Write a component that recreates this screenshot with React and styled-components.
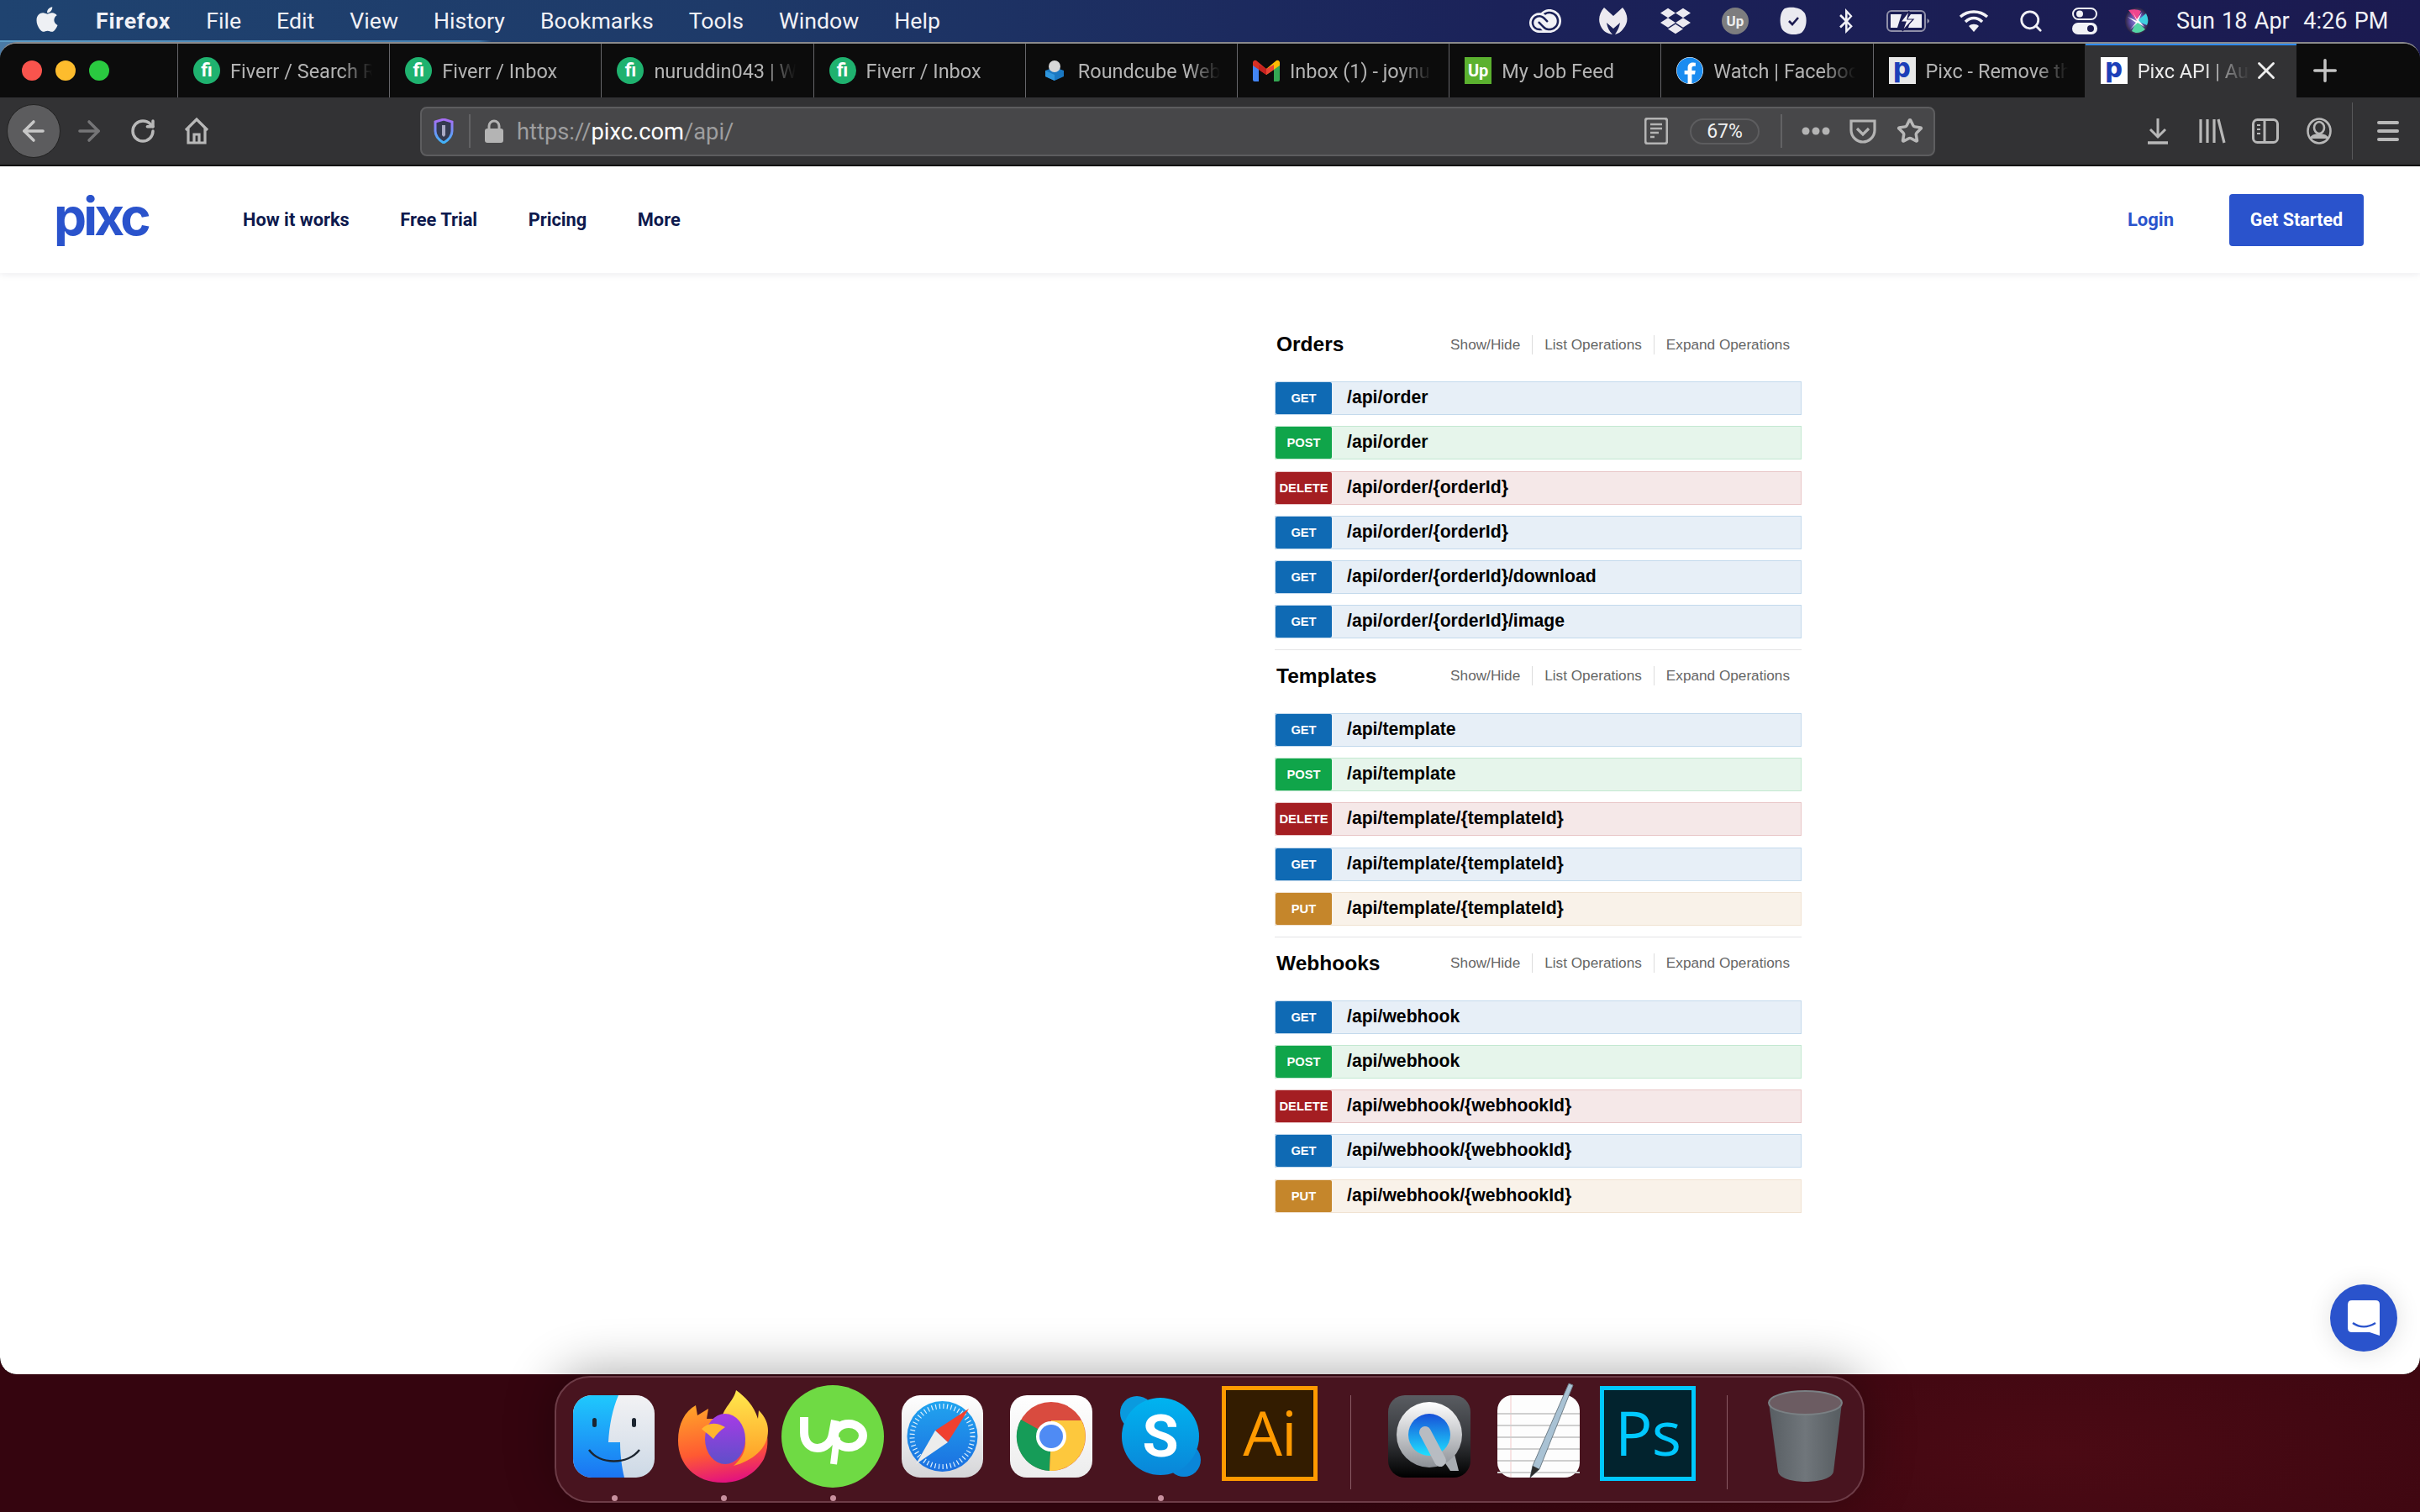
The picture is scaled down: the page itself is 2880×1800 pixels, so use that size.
import React from "react";
import styled, { createGlobalStyle } from "styled-components";
import { FaApple, FaDropbox, FaBluetoothB, FaFacebook } from "react-icons/fa";
import { SiAdobecreativecloud } from "react-icons/si";
import { ArrowLeft, ArrowRight, RotateCw, Search, Star, X, Plus } from "lucide-react";

const BLUE = "#2a53cc";

const GlobalStyle = createGlobalStyle`
  html, body {
    margin: 0;
    padding: 0;
    background: #35050f;
  }
  * {
    box-sizing: border-box;
  }
`;

const Desktop = styled.div`
  width: 2880px;
  height: 1800px;
  overflow: hidden;
  display: flex;
  flex-direction: column;
  font-family: Roboto, "Liberation Sans", sans-serif;
  background:
    linear-gradient(#4a7aa5, #4a7aa5) 0 50px / 20px 20px no-repeat,
    linear-gradient(#1b1a50, #1b1a50) 2860px 50px / 20px 20px no-repeat,
    radial-gradient(ellipse 900px 300px at 2450px 1730px, #4b0a14 0%, #3f0711 55%, #35050f 100%);
`;

/* mac menu bar */
const MenuBar = styled.div`
  height: 50px;
  flex: none;
  display: flex;
  align-items: center;
  color: #f1f1f6;
  font-size: 26.7px;
  background:
    linear-gradient(90deg, #5d9cc6 0, #3f78ab 570px, transparent 585px) bottom / 100% 2px no-repeat,
    linear-gradient(90deg, #1f4370 0%, #1e3a69 30%, #1b2259 62%, #1b1a50 100%);
`;

const AppleSlot = styled.div`
  width: 114px;
  flex: none;
  display: flex;
  justify-content: center;
  padding-right: 2px;
  margin-top: -4px;
`;

const MenuItems = styled.div`
  display: flex;
  gap: 42px;
`;

const MenuItem = styled.span`
  font-weight: ${({ $bold }) => ($bold ? 700 : 400)};
  letter-spacing: ${({ $bold }) => ($bold ? "0.8px" : "0")};
`;

const MenuRight = styled.div`
  margin-left: auto;
  display: flex;
  align-items: center;
  padding-right: 38px;
`;

const Slot = styled.div`
  width: ${({ $w }) => $w}px;
  margin-left: ${({ $ml }) => $ml || 0}px;
  flex: none;
  display: flex;
  align-items: center;
  justify-content: center;
  color: ${({ $color }) => $color || "inherit"};
`;

const Clock = styled.span`
  margin-left: 18px;
  width: 252px;
  font-size: 27px;
  word-spacing: 1.6px;
  white-space: pre;
`;

const UpBadge = styled.div`
  width: 32px;
  height: 32px;
  border-radius: 50%;
  background: #7d7d7f;
  color: #eee;
  font-size: 17px;
  font-weight: 700;
  display: flex;
  align-items: center;
  justify-content: center;
`;

/* browser window */
const Window = styled.div`
  height: 1586px;
  flex: none;
  display: flex;
  flex-direction: column;
  border-radius: 20px 20px 20px 20px;
  overflow: hidden;
  background: #0c0c0c;
  border-top: 2px solid #8a8a8c;
`;

const TabStrip = styled.div`
  height: 64px;
  flex: none;
  display: flex;
  background: #0c0c0c;
`;

const Traffic = styled.div`
  width: 211px;
  flex: none;
  display: flex;
  align-items: center;
  gap: 16px;
  padding-left: 26px;
`;

const Light = styled.span`
  width: 24px;
  height: 24px;
  border-radius: 50%;
  background: ${({ $c }) => $c};
`;

const Tab = styled.div`
  width: 252.2px;
  flex: none;
  display: flex;
  align-items: center;
  padding-left: 18px;
  border-left: 1px solid ${({ $active }) => ($active ? "transparent" : "#66666a")};
  background: ${({ $active }) => ($active ? "#323234" : "transparent")};
  box-shadow: ${({ $active }) => ($active ? "inset 0 2px 0 #2f8bf0" : "none")};
  position: relative;
`;

const Favicon = styled.div`
  width: 32px;
  height: 32px;
  flex: none;
  display: flex;
  align-items: center;
  justify-content: center;
  border-radius: ${({ $round }) => ($round ? "50%" : "0")};
  background: ${({ $bg }) => $bg || "transparent"};
  color: ${({ $fg }) => $fg || "#fff"};
  font-weight: ${({ $mono }) => ($mono ? 800 : 700)};
  font-size: ${({ $size }) => $size || 24}px;
  line-height: 1;
  padding-bottom: ${({ $mono }) => ($mono ? 6 : 0)}px;
  font-family: ${({ $mono }) => ($mono ? "Inter, sans-serif" : "inherit")};
`;

const TabLabel = styled.span`
  margin-left: 12px;
  padding-top: 2px;
  width: ${({ $w }) => $w || 182}px;
  white-space: nowrap;
  font-size: 23.5px;
  color: ${({ $active }) => ($active ? "#ededed" : "#b4b4b4")};
  mask-image: linear-gradient(90deg, #000 ${({ $w }) => ($w ? 54 : 72)}%, transparent ${({ $w }) => ($w ? 94 : 93)}%);
`;

const TabClose = styled.div`
  position: absolute;
  left: 198px;
  top: 15px;
  color: #eee;
  display: flex;
`;

const NewTab = styled.div`
  width: 68px;
  display: flex;
  align-items: center;
  justify-content: center;
  color: #c4c4c4;
`;

const Toolbar = styled.div`
  height: 80px;
  flex: none;
  display: flex;
  align-items: center;
  padding-left: 8px;
  background: #323234;
  color: #b8b8b8;
  border-bottom: 0;
`;

const BackButton = styled.div`
  width: 64px;
  height: 64px;
  flex: none;
  border-radius: 50%;
  background: #5c5c5e;
  border: 1px solid #222;
  display: flex;
  align-items: center;
  justify-content: center;
  color: #c8c8c8;
`;

const UrlBar = styled.div`
  width: 1803px;
  height: 59px;
  margin-left: 232px;
  flex: none;
  display: flex;
  align-items: center;
  background: #474749;
  border: 2px solid #5d5d5f;
  border-radius: 8px;
`;

const UrlDivider = styled.span`
  width: 2px;
  height: ${({ $h }) => $h || 40}px;
  flex: none;
  margin-left: ${({ $ml }) => $ml}px;
  background: #626264;
`;

const UrlText = styled.div`
  margin-left: 15px;
  padding-top: 1px;
  font-size: 27.3px;
  color: #9e9e9f;
  white-space: nowrap;
`;

const UrlHost = styled.span`
  color: #fff;
`;

const ZoomPill = styled.div`
  width: 83px;
  height: 31px;
  margin-left: 25px;
  flex: none;
  border: 2px solid #5d5d5f;
  border-radius: 16px;
  display: flex;
  align-items: center;
  justify-content: center;
  color: #f0f0f0;
  font-size: 23px;
`;

const UrlActions = styled.div`
  margin-left: auto;
  display: flex;
  align-items: center;
  padding-right: 10px;
`;

const ToolbarDivider = styled.span`
  width: 1px;
  height: 68px;
  margin-left: 5px;
  flex: none;
  background: #58585a;
`;

/* web page */
const Page = styled.div`
  flex: 1;
  position: relative;
  margin-top: 2px;
  background: #fff;
  border-radius: 0 0 20px 20px;
`;

const SiteNav = styled.div`
  height: 127px;
  display: flex;
  align-items: center;
  padding-left: 64px;
  padding-right: 67px;
  box-shadow: 0 2px 8px rgba(20, 30, 70, 0.08);
`;

const Logo = styled.div`
  width: 225px;
  flex: none;
  font-family: Inter, sans-serif;
  font-weight: 700;
  font-size: 62px;
  letter-spacing: -3.8px;
  line-height: 1;
  color: ${BLUE};
  margin-top: -8px;
`;

const NavLinks = styled.div`
  display: flex;
  gap: 60.5px;
`;

const NavLink = styled.a`
  font-size: 21.8px;
  font-weight: 700;
  color: #0e1a4e;
`;

const NavRight = styled.div`
  margin-left: auto;
  display: flex;
  align-items: center;
  gap: 66px;
`;

const LoginLink = styled.a`
  font-size: 22px;
  font-weight: 700;
  color: ${BLUE};
`;

const CtaButton = styled.div`
  width: 160px;
  height: 62px;
  border-radius: 4px;
  background: ${BLUE};
  color: #fff;
  font-size: 21.5px;
  font-weight: 700;
  display: flex;
  align-items: center;
  justify-content: center;
`;

const ApiList = styled.div`
  width: 627px;
  margin-left: 1517px;
  padding-top: 70px;
  font-family: "Liberation Sans", Arial, sans-serif;
`;

const Section = styled.section`
  padding-top: ${({ $first }) => ($first ? 0 : 16)}px;
  padding-bottom: 12.7px;
  border-top: ${({ $first }) => ($first ? "none" : "1px solid #e4e4e6")};
`;

const SectionHead = styled.div`
  height: 30px;
  margin-bottom: 29px;
  display: flex;
  align-items: center;
  justify-content: space-between;
  padding-left: 2px;
  padding-right: 14px;
`;

const SectionTitle = styled.h2`
  margin: 0;
  font-size: 24.5px;
  font-weight: 700;
  color: #000;
`;

const SectionLinks = styled.div`
  display: flex;
  align-items: center;
`;

const SectionLink = styled.span`
  height: 23px;
  line-height: 23px;
  font-size: 17.2px;
  color: #666;
  padding: 0 14px;
  border-left: 1px solid #ddd;
  &:first-child {
    border-left: none;
  }
  &:last-child {
    padding-right: 0;
  }
`;

const Rows = styled.div`
  display: flex;
  flex-direction: column;
  gap: 13.25px;
`;

const METHOD = {
  GET: { main: "#0f6ab4", bg: "#e7eff7", line: "#c3d9ec" },
  POST: { main: "#10a54a", bg: "#e6f5eb", line: "#c3e8d1" },
  DELETE: { main: "#a41e22", bg: "#f5e8e8", line: "#e8c6c7" },
  PUT: { main: "#c5862b", bg: "#f9f2e9", line: "#f0e2d1" },
};

const Row = styled.div`
  height: 40px;
  display: flex;
  align-items: center;
  background: ${({ $m }) => METHOD[$m].bg};
  border: 1px solid ${({ $m }) => METHOD[$m].line};
`;

const MethodTag = styled.span`
  width: 67px;
  height: 38px;
  flex: none;
  border-radius: 2px;
  background: ${({ $m }) => METHOD[$m].main};
  color: #fff;
  font-size: 14.7px;
  font-weight: 700;
  display: flex;
  align-items: center;
  justify-content: center;
`;

const RowPath = styled.span`
  margin-left: 18px;
  margin-bottom: 2px;
  font-size: 21.2px;
  font-weight: 700;
  color: #000;
`;

const ChatBubble = styled.div`
  position: absolute;
  left: 2773px;
  top: 1331px;
  width: 80px;
  height: 80px;
  border-radius: 50%;
  background: ${BLUE};
  box-shadow: 0 2px 30px rgba(0, 0, 0, 0.12);
  display: flex;
  align-items: center;
  justify-content: center;
`;

/* dock */
const Dock = styled.div`
  position: relative;
  width: 1559px;
  height: 151px;
  margin-top: 2px;
  margin-left: 660px;
  flex: none;
  display: flex;
  align-items: center;
  padding-left: 20px;
  padding-bottom: 8px;
  background: #48141f;
  border: 2px solid #6d3c47;
  border-radius: 42px;
  box-shadow: 0 -6px 60px rgba(0, 0, 0, 0.32);
`;

const DockItem = styled.div`
  position: relative;
  width: ${({ $w }) => $w}px;
  height: ${({ $h }) => $h}px;
  margin-left: ${({ $ml }) => $ml || 0}px;
  margin-top: ${({ $mt }) => $mt || 0}px;
  flex: none;
`;

const DockDot = styled.span`
  position: absolute;
  left: 50%;
  top: calc(50% + 70px);
  width: 7px;
  height: 7px;
  margin-left: -3px;
  border-radius: 50%;
  background: #c8909e;
`;

const DockSep = styled.span`
  width: 1px;
  height: 112px;
  margin-left: ${({ $ml }) => $ml}px;
  margin-top: 14px;
  flex: none;
  background: #8a5a64;
`;

const AppTile = styled.div`
  width: 100%;
  height: 100%;
  border: 5px solid ${({ $line }) => $line};
  box-shadow: inset 0 0 0 1px rgba(0, 0, 0, 0.25);
  background: ${({ $bg }) => $bg};
  color: ${({ $line }) => $line};
  font-family: "Open Sans", sans-serif;
  font-weight: 500;
  font-size: 74px;
  line-height: 100px;
  text-align: center;
  letter-spacing: -1px;
`;

const Fill = styled.svg`
  display: block;
  width: 100%;
  height: 100%;
  overflow: visible;
`;

/* small icons */
const Malware = () => (
  <svg width="36" height="34" viewBox="0 0 36 34" fill="#eceaf0">
    <path d="M7 1 L18 11 L29 1 C35 8 37 18 30 26 C27 30 24 32 20 33 C23 28 25 25 26 19 L18 26 L10 19 C11 25 13 29 17 33 C11 32 7 30 4 25 C-1 17 1 8 7 1Z" />
  </svg>
);

const TodoBadge = () => (
  <svg width="32" height="34" viewBox="0 0 32 34">
    <path d="M6 2 C14 -1 26 1 30 8 C33 15 32 26 26 31 C18 35 7 33 3 27 C-1 20 0 6 6 2Z" fill="#eaeaf0" />
    <path d="M11 17 L15 21 L22 13" stroke="#1b1a50" strokeWidth="2.6" fill="none" />
  </svg>
);

const Battery = () => (
  <svg width="52" height="26" viewBox="0 0 52 26">
    <rect x="1" y="1" width="45" height="24" rx="5" fill="none" stroke="#8f8fa8" strokeWidth="2" />
    <path d="M5 5 H18 L13 21 H5Z M42 5 H29 L24 12 H29 L26 21 H42Z" fill="#f1f1f6" />
    <path d="M27 1 L17 14 H23 L19 25 L32 11 H25Z" fill="#f1f1f6" stroke="#1b1a50" strokeWidth="1.2" />
    <path d="M48.500 10 L51 12 V14 L48.500 16Z" fill="#8f8fa8" />
  </svg>
);

const Wifi = () => (
  <svg width="36" height="30" viewBox="0 0 36 30" fill="none" stroke="#f1f1f6" strokeWidth="3.4">
    <path d="M2 10 C11 2 25 2 34 10" />
    <path d="M8 16 C14 10 22 10 28 16" />
    <path d="M18 28 L12 21 C15 18 21 18 24 21Z" fill="#f1f1f6" stroke="none" />
  </svg>
);

const ControlCenter = () => (
  <svg width="30" height="32" viewBox="0 0 30 32">
    <rect x="1" y="1" width="28" height="13" rx="6.500" fill="none" stroke="#f1f1f6" strokeWidth="2" />
    <circle cx="9" cy="7.500" r="4" fill="#f1f1f6" />
    <rect x="0" y="18" width="30" height="14" rx="7" fill="#f1f1f6" />
    <circle cx="22" cy="25" r="4" fill="#1b1a50" />
  </svg>
);

const Siri = () => (
  <svg width="30" height="34" viewBox="0 0 30 34">
    <defs>
      <radialGradient id="siriBg">
        <stop offset="0" stopColor="#9a8fe0" />
        <stop offset="0.6" stopColor="#5a4aa0" />
        <stop offset="1" stopColor="#2c2440" />
      </radialGradient>
    </defs>
    <ellipse cx="15" cy="17" rx="14" ry="16" fill="url(#siriBg)" />
    <path d="M15 17 L5 4 Q14 2 20 5Z" fill="#f0458e" />
    <path d="M15 17 L26 8 Q30 16 27 22Z" fill="#3fd0e0" />
    <path d="M15 17 L25 27 Q16 34 9 29Z" fill="#55d6a5" />
    <path d="M15 17 L4 12 L14 19 L7 27 L16 19 L24 24 L17 16 L21 7 L15 15 L10 6Z" fill="#fff" />
  </svg>
);

const Shield = () => (
  <svg width="24" height="30" viewBox="0 0 24 30">
    <defs>
      <linearGradient id="shieldLine" x1="0" y1="0" x2="0" y2="1">
        <stop offset="0" stopColor="#a86df5" />
        <stop offset="1" stopColor="#3fb3f8" />
      </linearGradient>
    </defs>
    <path d="M2 4 L12 1 L22 4 V15 C22 22 17 26 12 29 C7 26 2 22 2 15Z" fill="#343a50" stroke="url(#shieldLine)" strokeWidth="3" />
    <path d="M10 8 H14 V20 L12 22 L10 20Z" fill="#a9a9c4" />
  </svg>
);

const LockIcon = () => (
  <svg width="24" height="28" viewBox="0 0 24 28" fill="#b4b4b4">
    <path d="M6 12 V8 a6 6 0 0 1 12 0 V12" fill="none" stroke="#b4b4b4" strokeWidth="3" />
    <rect x="1" y="11" width="22" height="17" rx="3" />
  </svg>
);

const HomeIcon = () => (
  <svg width="32" height="32" viewBox="0 0 32 32" fill="none" stroke="#b8b8b8" strokeWidth="3.2">
    <path d="M3 15 L16 2 L29 15" />
    <path d="M6 13 V30 H26 V13" />
    <path d="M13 30 V20 H19 V30" />
  </svg>
);

const ReaderIcon = () => (
  <svg width="28" height="32" viewBox="0 0 28 32">
    <rect x="1" y="1" width="26" height="30" rx="3" fill="none" stroke="#b4b4b4" strokeWidth="3" />
    <path d="M7 8 H21 M7 13 H21 M7 18 H17 M7 23 H12" stroke="#b4b4b4" strokeWidth="2.400" />
  </svg>
);

const PocketIcon = () => (
  <svg width="32" height="30" viewBox="0 0 32 30" fill="none" stroke="#b4b4b4" strokeWidth="3.200">
    <path d="M2 3 H30 V14 C30 22 23 28 16 28 C9 28 2 22 2 14Z" />
    <path d="M9 12 L16 19 L23 12" />
  </svg>
);

const DotsIcon = () => (
  <svg width="34" height="10" viewBox="0 0 34 10" fill="#b4b4b4">
    <circle cx="5" cy="5" r="4.500" />
    <circle cx="17" cy="5" r="4.500" />
    <circle cx="29" cy="5" r="4.500" />
  </svg>
);

const DownloadIcon = () => (
  <svg width="26" height="32" viewBox="0 0 26 32" fill="none" stroke="#b8b8b8" strokeWidth="3">
    <path d="M13 1 V23 M4 14 L13 23 L22 14" />
    <path d="M1 30 H25" strokeWidth="3.600" />
  </svg>
);

const LibraryIcon = () => (
  <svg width="32" height="30" viewBox="0 0 32 30" fill="none" stroke="#b8b8b8" strokeWidth="3.200">
    <path d="M2 1 V29 M10 1 V29 M18 1 V29 M23 1 L30 29" />
  </svg>
);

const SidebarIcon = () => (
  <svg width="32" height="30" viewBox="0 0 32 30" fill="none" stroke="#b8b8b8" strokeWidth="3">
    <rect x="1.500" y="1.500" width="29" height="27" rx="5" />
    <path d="M15 1 V29" />
    <path d="M6 8 H10 M6 13 H10 M6 18 H10" strokeWidth="2.200" />
  </svg>
);

const AccountIcon = () => (
  <svg width="30" height="32" viewBox="0 0 30 32" fill="none" stroke="#b8b8b8" strokeWidth="2.600">
    <ellipse cx="15" cy="16" rx="13.500" ry="14.500" />
    <ellipse cx="15" cy="12" rx="6" ry="7" />
    <path d="M5 25 C7 19 23 19 25 25" fill="#b8b8b8" />
  </svg>
);

const MenuIcon = () => (
  <svg width="26" height="24" viewBox="0 0 26 24" fill="#b8b8b8">
    <rect y="0" width="26" height="4" rx="2" />
    <rect y="10" width="26" height="4" rx="2" />
    <rect y="20" width="26" height="4" rx="2" />
  </svg>
);

const Roundcube = () => (
  <svg width="24" height="26" viewBox="0 0 24 26">
    <path d="M1 13 L12 9 L23 13 V20 L12 25 L1 20Z" fill="#1a78c2" />
    <path d="M1 13 L12 18 V25 L1 20Z" fill="#2f96dd" />
    <circle cx="12" cy="8" r="7" fill="#d8d8d8" />
  </svg>
);

const Gmail = () => (
  <svg width="32" height="26" viewBox="0 0 32 26">
    <path d="M0 3 L7 6 V26 H2 Q0 26 0 24Z" fill="#4285f4" />
    <path d="M32 3 L25 6 V26 H30 Q32 26 32 24Z" fill="#34a853" />
    <path d="M0 7 V3 Q1 0 4 1 L16 11 L16 18Z" fill="#d93025" />
    <path d="M7 6 L16 11 V18 L7 12Z" fill="#c5221f" />
    <path d="M32 7 V3 Q31 0 28 1 L16 11 V18Z" fill="#fbbc04" />
    <path d="M25 6 L16 11 V18 L25 12Z" fill="#ea4335" />
  </svg>
);

const ChatIcon = () => (
  <svg width="38" height="42" viewBox="0 0 38 42">
    <path d="M5 0 H33 Q38 0 38 5 V42 L26 38 H5 Q0 38 0 33 V5 Q0 0 5 0Z" fill="#fff" />
    <path d="M6 27 C15 33 23 33 33 27" fill="none" stroke={BLUE} strokeWidth="2.600" />
  </svg>
);

/* dock art */
const Finder = () => (
  <Fill viewBox="0 0 97 98">
    <defs>
      <linearGradient id="fL" x1="0" y1="0" x2="0" y2="1">
        <stop offset="0" stopColor="#1fc9fd" />
        <stop offset="1" stopColor="#1b74f2" />
      </linearGradient>
      <linearGradient id="fR" x1="0" y1="0" x2="0" y2="1">
        <stop offset="0" stopColor="#f2f2f4" />
        <stop offset="1" stopColor="#cdd9e6" />
      </linearGradient>
      <clipPath id="fC">
        <rect width="97" height="98" rx="22" />
      </clipPath>
    </defs>
    <g clipPath="url(#fC)">
      <rect width="97" height="98" fill="url(#fR)" />
      <path d="M0 0 H54 C47 16 43 36 42 56 H56 C56 70 58 86 61 98 H0Z" fill="url(#fL)" />
    </g>
    <rect x="23" y="27" width="5" height="11" rx="2.500" fill="#1c2530" />
    <rect x="70" y="27" width="5" height="11" rx="2.500" fill="#1c2530" />
    <path d="M19 65 C32 83 65 83 79 65" fill="none" stroke="#1c2530" strokeWidth="2.500" />
  </Fill>
);

const Firefox = () => (
  <Fill viewBox="0 0 107 110">
    <defs>
      <linearGradient id="ffO" x1="0.3" y1="0" x2="0.5" y2="1">
        <stop offset="0" stopColor="#ffa229" />
        <stop offset="0.6" stopColor="#ff5a32" />
        <stop offset="1" stopColor="#e3127f" />
      </linearGradient>
      <linearGradient id="ffY" x1="0.5" y1="0" x2="0.5" y2="1">
        <stop offset="0" stopColor="#ffe94e" />
        <stop offset="1" stopColor="#ff9a24" />
      </linearGradient>
      <linearGradient id="ffP" x1="0.5" y1="0" x2="0.5" y2="1">
        <stop offset="0" stopColor="#a63be6" />
        <stop offset="1" stopColor="#5f4fc9" />
      </linearGradient>
    </defs>
    <path d="M53 110 C20 110 0 88 0 60 C0 40 8 25 21 18 L23 30 L36 22 L34 34 L74 34 L104 40 C108 60 107 70 102 82 C92 100 74 110 53 110Z" fill="url(#ffO)" />
    <path d="M69 0 C66 14 52 22 52 36 C52 44 60 46 75 46 C85 62 80 78 66 90 C88 84 107 70 107 48 C107 40 104 32 96 24 L95 34 C90 18 80 8 69 0Z" fill="url(#ffY)" />
    <ellipse cx="56" cy="58" rx="24" ry="30" fill="url(#ffP)" />
    <path d="M28 46 C36 38 46 38 56 44 C50 48 46 52 42 58 C36 52 32 50 28 46Z" fill="#ffb52e" />
  </Fill>
);

const UpworkLogo = () => (
  <Fill viewBox="0 0 122 122">
    <circle cx="61" cy="61" r="61" fill="#6fda44" />
    <g fill="none" stroke="#fff" strokeWidth="10">
      <path d="M27 38 V56 C27 82 58 80 61 58 L64 42" />
      <ellipse cx="80" cy="60" rx="17" ry="14" />
      <path d="M66 62 L62 94" strokeWidth="8" />
    </g>
  </Fill>
);

const Safari = () => (
  <Fill viewBox="0 0 97 98">
    <defs>
      <linearGradient id="sBg" x1="0" y1="0" x2="0" y2="1">
        <stop offset="0" stopColor="#fff" />
        <stop offset="1" stopColor="#d5d5d8" />
      </linearGradient>
      <linearGradient id="sD" x1="0" y1="0" x2="0" y2="1">
        <stop offset="0" stopColor="#21a4ef" />
        <stop offset="1" stopColor="#1b6fe0" />
      </linearGradient>
    </defs>
    <rect width="97" height="98" rx="22" fill="url(#sBg)" />
    <circle cx="48.500" cy="49" r="42" fill="url(#sD)" />
    <circle cx="48.500" cy="49" r="36" fill="none" stroke="#dff1fc" strokeWidth="6" strokeDasharray="1.200 3.400" />
    <path d="M80 16 L40 42 L55 56Z" fill="#f0402f" />
    <path d="M17 82 L40 42 L55 56Z" fill="#ececec" />
  </Fill>
);

const Chrome = () => (
  <Fill viewBox="0 0 98 98">
    <defs>
      <linearGradient id="cBg" x1="0" y1="0" x2="0" y2="1">
        <stop offset="0" stopColor="#fff" />
        <stop offset="1" stopColor="#ececec" />
      </linearGradient>
    </defs>
    <rect width="98" height="98" rx="20" fill="url(#cBg)" />
    <circle cx="49" cy="49" r="41" fill="#d94b3f" />
    <path d="M49 49 L13 29 A41 41 0 0 0 47 90Z" fill="#169c58" />
    <path d="M49 49 L47 90 A41 41 0 0 0 85 30 L49 30Z" fill="#fdc83d" />
    <circle cx="49" cy="49" r="18" fill="#fff" />
    <circle cx="49" cy="49" r="14" fill="#4f8bf4" />
  </Fill>
);

const Skype = () => (
  <Fill viewBox="0 0 96 96">
    <defs>
      <linearGradient id="skB" x1="0" y1="0" x2="0" y2="1">
        <stop offset="0" stopColor="#00b4f0" />
        <stop offset="1" stopColor="#0a86d8" />
      </linearGradient>
    </defs>
    <circle cx="20" cy="20" r="20" fill="#0a9ade" />
    <circle cx="76" cy="76" r="20" fill="#0a86d8" />
    <ellipse cx="48" cy="48" rx="46" ry="46" fill="url(#skB)" />
    <text x="48" y="72" textAnchor="middle" fontFamily="Roboto, sans-serif" fontWeight="700" fontSize="70" fill="#fff">S</text>
  </Fill>
);

const QuickTime = () => (
  <Fill viewBox="0 0 98 98">
    <defs>
      <linearGradient id="qBg" x1="0" y1="0" x2="0" y2="1">
        <stop offset="0" stopColor="#5a5d62" />
        <stop offset="0.55" stopColor="#34363a" />
        <stop offset="1" stopColor="#000" />
      </linearGradient>
      <linearGradient id="qR" x1="0" y1="0" x2="0" y2="1">
        <stop offset="0" stopColor="#fff" />
        <stop offset="1" stopColor="#8c9096" />
      </linearGradient>
      <linearGradient id="qB" x1="0" y1="0" x2="0" y2="1">
        <stop offset="0" stopColor="#1750d8" />
        <stop offset="1" stopColor="#1fe0ff" />
      </linearGradient>
    </defs>
    <rect width="98" height="98" rx="20" fill="url(#qBg)" />
    <path d="M84 90 L74 90 L66 78 L78 66Z" fill="#a9adb2" />
    <circle cx="49" cy="47" r="39" fill="url(#qR)" />
    <circle cx="49" cy="47" r="25" fill="url(#qB)" />
    <path d="M44 44 L62 78" stroke="#b8bcc2" strokeWidth="14" strokeLinecap="round" />
  </Fill>
);

const NotesPad = () => (
  <Fill viewBox="0 0 98 112">
    <rect x="0" y="14" width="98" height="98" rx="18" fill="#fdfdfd" />
    <path d="M16 14 V112" stroke="#f3c9c9" strokeWidth="1" />
    {[36, 50, 64, 78, 92, 106].map((y) => (
      <path key={y} d="M0 0 H98" transform={`translate(0 ${y})`} stroke="#cfcfcf" strokeWidth="2" />
    ))}
    <path d="M85 0 L90 2 L50 102 L39 112 L42 98Z" fill="#a9c2d4" stroke="#6f7e88" strokeWidth="1" />
    <path d="M50 102 L39 112 L42 98Z" fill="#2d2d2d" />
  </Fill>
);

const Trash = () => (
  <Fill viewBox="0 0 87 108">
    <defs>
      <linearGradient id="tG" x1="0" y1="0" x2="1" y2="0">
        <stop offset="0" stopColor="#585e63" />
        <stop offset="0.5" stopColor="#70767b" />
        <stop offset="1" stopColor="#565c60" />
      </linearGradient>
    </defs>
    <path d="M0 14 H87 L77 96 C74 112 14 112 11 96Z" fill="url(#tG)" />
    <ellipse cx="43.500" cy="14" rx="43.500" ry="14" fill="#6c5c62" stroke="#7a8084" strokeWidth="2" />
  </Fill>
);

const TABS = [
  { key: "f1", label: "Fiverr / Search R", fav: "fi" },
  { key: "f2", label: "Fiverr / Inbox", fav: "fi" },
  { key: "f3", label: "nuruddin043 | W", fav: "fi" },
  { key: "f4", label: "Fiverr / Inbox", fav: "fi" },
  { key: "rc", label: "Roundcube Web", fav: "rc" },
  { key: "gm", label: "Inbox (1) - joynu", fav: "gm" },
  { key: "up", label: "My Job Feed", fav: "up" },
  { key: "fb", label: "Watch | Faceboo", fav: "fb" },
  { key: "px", label: "Pixc - Remove th", fav: "px" },
];

const tabIcon = (fav, active) => {
  if (fav === "fi") return <Favicon $round $bg="#1fb26f" $size={22}>fi</Favicon>;
  if (fav === "rc") return <Favicon><Roundcube /></Favicon>;
  if (fav === "gm") return <Favicon><Gmail /></Favicon>;
  if (fav === "up") return <Favicon $bg="#5bb12f" $size={20}>Up</Favicon>;
  if (fav === "fb") return <Favicon><FaFacebook size={32} color="#1a8cf0" style={{ background: "#fff", borderRadius: "50%" }} /></Favicon>;
  return <Favicon $bg={active ? "#fff" : "#e8e8e8"} $fg="#1c3fb8" $mono $size={32}>p</Favicon>;
};

const SECTIONS = [
  {
    title: "Orders",
    rows: [
      ["GET", "/api/order"],
      ["POST", "/api/order"],
      ["DELETE", "/api/order/{orderId}"],
      ["GET", "/api/order/{orderId}"],
      ["GET", "/api/order/{orderId}/download"],
      ["GET", "/api/order/{orderId}/image"],
    ],
  },
  {
    title: "Templates",
    rows: [
      ["GET", "/api/template"],
      ["POST", "/api/template"],
      ["DELETE", "/api/template/{templateId}"],
      ["GET", "/api/template/{templateId}"],
      ["PUT", "/api/template/{templateId}"],
    ],
  },
  {
    title: "Webhooks",
    rows: [
      ["GET", "/api/webhook"],
      ["POST", "/api/webhook"],
      ["DELETE", "/api/webhook/{webhookId}"],
      ["GET", "/api/webhook/{webhookId}"],
      ["PUT", "/api/webhook/{webhookId}"],
    ],
  },
];

export default function App() {
  return (
    <Desktop>
      <GlobalStyle />
      <MenuBar>
        <AppleSlot>
          <FaApple size={34} color="#eef0f4" />
        </AppleSlot>
        <MenuItems>
          <MenuItem $bold>Firefox</MenuItem>
          {["File", "Edit", "View", "History", "Bookmarks", "Tools", "Window", "Help"].map((m) => (
            <MenuItem key={m}>{m}</MenuItem>
          ))}
        </MenuItems>
        <MenuRight>
          <Slot $w={78}><SiAdobecreativecloud size={38} /></Slot>
          <Slot $w={84}><Malware /></Slot>
          <Slot $w={64}><FaDropbox size={36} color="#eceaf0" /></Slot>
          <Slot $w={78}><UpBadge>Up</UpBadge></Slot>
          <Slot $w={60}><TodoBadge /></Slot>
          <Slot $w={66}><FaBluetoothB size={30} /></Slot>
          <Slot $w={82}><Battery /></Slot>
          <Slot $w={74}><Wifi /></Slot>
          <Slot $w={62}><Search size={30} strokeWidth={2.2} /></Slot>
          <Slot $w={66}><ControlCenter /></Slot>
          <Slot $w={58}><Siri /></Slot>
          <Clock>Sun 18 Apr  4:26 PM</Clock>
        </MenuRight>
      </MenuBar>

      <Window>
        <TabStrip>
          <Traffic>
            <Light $c="#f9544d" />
            <Light $c="#fdbc2d" />
            <Light $c="#2ac940" />
          </Traffic>
          {TABS.map((t) => (
            <Tab key={t.key}>
              {tabIcon(t.fav)}
              <TabLabel>{t.label}</TabLabel>
            </Tab>
          ))}
          <Tab $active>
            {tabIcon("px", true)}
            <TabLabel $active $w={142}>Pixc API | Aut</TabLabel>
            <TabClose><X size={34} strokeWidth={2} /></TabClose>
          </Tab>
          <NewTab><Plus size={42} strokeWidth={2} /></NewTab>
        </TabStrip>

        <Toolbar>
          <BackButton><ArrowLeft size={38} strokeWidth={2.2} /></BackButton>
          <Slot $w={68} $color="#757577"><ArrowRight size={38} strokeWidth={2.2} /></Slot>
          <Slot $w={60}><RotateCw size={32} strokeWidth={2.6} /></Slot>
          <Slot $w={68}><HomeIcon /></Slot>
          <UrlBar>
            <Slot $w={24} $ml={14}><Shield /></Slot>
            <UrlDivider $ml={18} />
            <Slot $w={24} $ml={16}><LockIcon /></Slot>
            <UrlText>https://<UrlHost>pixc.com</UrlHost>/api/</UrlText>
            <UrlActions>
              <Slot $w={30}><ReaderIcon /></Slot>
              <ZoomPill>67%</ZoomPill>
              <UrlDivider $ml={25} />
              <Slot $w={80}><DotsIcon /></Slot>
              <Slot $w={32}><PocketIcon /></Slot>
              <Slot $w={36} $ml={22}><Star size={32} strokeWidth={2.6} /></Slot>
            </UrlActions>
          </UrlBar>
          <Slot $w={64} $ml={233}><DownloadIcon /></Slot>
          <Slot $w={66}><LibraryIcon /></Slot>
          <Slot $w={60}><SidebarIcon /></Slot>
          <Slot $w={68}><AccountIcon /></Slot>
          <ToolbarDivider />
          <Slot $w={84}><MenuIcon /></Slot>
        </Toolbar>

        <Page>
          <SiteNav>
            <Logo>pixc</Logo>
            <NavLinks>
              <NavLink>How it works</NavLink>
              <NavLink>Free Trial</NavLink>
              <NavLink>Pricing</NavLink>
              <NavLink>More</NavLink>
            </NavLinks>
            <NavRight>
              <LoginLink>Login</LoginLink>
              <CtaButton>Get Started</CtaButton>
            </NavRight>
          </SiteNav>

          <ApiList>
            {SECTIONS.map((s, i) => (
              <Section key={s.title} $first={i === 0}>
                <SectionHead>
                  <SectionTitle>{s.title}</SectionTitle>
                  <SectionLinks>
                    <SectionLink>Show/Hide</SectionLink>
                    <SectionLink>List Operations</SectionLink>
                    <SectionLink>Expand Operations</SectionLink>
                  </SectionLinks>
                </SectionHead>
                <Rows>
                  {s.rows.map(([method, path], j) => (
                    <Row key={j} $m={method}>
                      <MethodTag $m={method}>{method}</MethodTag>
                      <RowPath>{path}</RowPath>
                    </Row>
                  ))}
                </Rows>
              </Section>
            ))}
          </ApiList>

          <ChatBubble><ChatIcon /></ChatBubble>
        </Page>
      </Window>

      <Dock>
        <DockItem $w={97} $h={98}><Finder /><DockDot /></DockItem>
        <DockItem $w={107} $h={110} $ml={28}><Firefox /><DockDot /></DockItem>
        <DockItem $w={122} $h={122} $ml={16}><UpworkLogo /><DockDot /></DockItem>
        <DockItem $w={97} $h={98} $ml={21}><Safari /></DockItem>
        <DockItem $w={98} $h={98} $ml={32}><Chrome /></DockItem>
        <DockItem $w={96} $h={96} $ml={33}><Skype /><DockDot /></DockItem>
        <DockItem $w={114} $h={113} $ml={25} $mt={-7}><AppTile $line="#ff9a00" $bg="#331c00">Ai</AppTile></DockItem>
        <DockSep $ml={39} />
        <DockItem $w={98} $h={98} $ml={44}><QuickTime /></DockItem>
        <DockItem $w={98} $h={112} $ml={32} $mt={-14}><NotesPad /></DockItem>
        <DockItem $w={114} $h={113} $ml={24} $mt={-7}><AppTile $line="#00c8ff" $bg="#02232e">Ps</AppTile></DockItem>
        <DockSep $ml={37} />
        <DockItem $w={87} $h={108} $ml={49}><Trash /></DockItem>
      </Dock>
    </Desktop>
  );
}
